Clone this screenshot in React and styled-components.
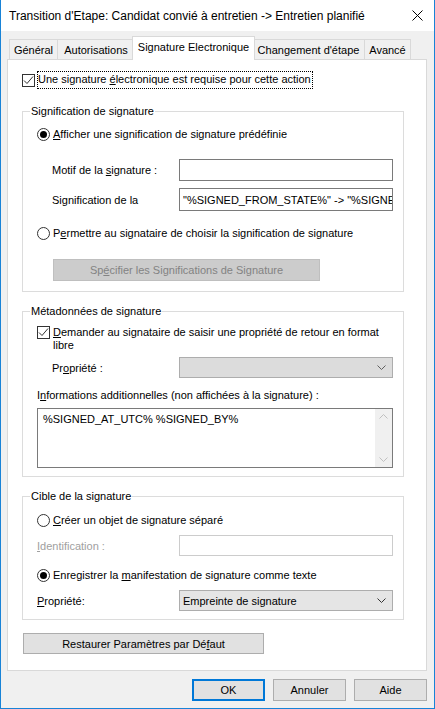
import React from "react";
import styled, { createGlobalStyle } from "styled-components";

const FONT = `"Liberation Sans", Arial, sans-serif`;

const GlobalStyle = createGlobalStyle`
  html, body { margin: 0; padding: 0; background: #fff; }
  body { font-family: ${FONT}; font-size: 11px; color: #000; }
  * { box-sizing: border-box; }
`;

const Window = styled.div`
  width: 435px;
  height: 709px;
  border: 1px solid #1883d7;
  border-top: none;
  background: #f0f0f0;
  display: flex;
  flex-direction: column;
`;

const TitleBar = styled.div`
  height: 31px;
  background: #fff;
  display: flex;
  align-items: center;
  justify-content: space-between;
  padding: 0 11px 0 8px;
  font-size: 12px;
`;

const Body = styled.div`
  flex: 1;
  padding: 5px 7px 0 6px;
  display: flex;
  flex-direction: column;
`;

const TabStrip = styled.div`
  display: flex;
  align-items: flex-end;
  height: 23px;
  padding-left: 2px;
`;

const Tab = styled.div`
  position: relative;
  width: ${(p) => p.w}px;
  height: ${(p) => (p.active ? 24 : 20)}px;
  margin-left: ${(p) => (p.active ? -3 : p.first ? 0 : -1)}px;
  margin-right: ${(p) => (p.active ? -2 : 0)}px;
  margin-bottom: ${(p) => (p.active ? -1 : 0)}px;
  z-index: ${(p) => (p.active ? 2 : 1)};
  border: 1px solid #d9d9d9;
  border-bottom: none;
  background: ${(p) => (p.active ? "#fff" : "#f0f0f0")};
  display: flex;
  justify-content: center;
  align-items: ${(p) => (p.active ? "flex-start" : "center")};
  padding-top: ${(p) => (p.active ? 4 : 1)}px;
  white-space: nowrap;
`;

const Panel = styled.div`
  height: 612px;
  border: 1px solid #d9d9d9;
  background: #fff;
  padding: 11px 22px 0 14px;
  display: flex;
  flex-direction: column;
`;

const TopCheckRow = styled.div`
  display: flex;
  align-items: center;
  height: 18px;
`;

const FocusLabel = styled.span`
  margin-left: 2px;
  border: 1px dotted #000;
  padding: 1px 1px 2px 0;
  line-height: 13px;
`;

const Group = styled.fieldset`
  margin: ${(p) => p.mt}px 0 0 0;
  padding: 0 10px ${(p) => p.pb}px 14px;
  border: 1px solid #dcdcdc;
  min-width: 0;
  display: flex;
  flex-direction: column;
`;

const Legend = styled.legend`
  margin-left: -7px;
  padding: 0 1px;
  line-height: 15px;
`;

const OptionRow = styled.label`
  display: flex;
  align-items: ${(p) => (p.multi ? "flex-start" : "center")};
  min-height: 16px;
  margin-top: ${(p) => p.mt}px;
  gap: 3px;
  line-height: 13px;
`;

const RadioDot = styled.span`
  flex: none;
  width: 13px;
  height: 13px;
  border-radius: 50%;
  border: 1px solid #333;
  background: #fff;
  display: flex;
  align-items: center;
  justify-content: center;
  &::after {
    content: "";
    width: 7px;
    height: 7px;
    border-radius: 50%;
    background: ${(p) => (p.checked ? "#000" : "transparent")};
  }
`;

const CheckBox = styled.span`
  flex: none;
  width: 13px;
  height: 13px;
  border: 1px solid #333;
  background: #fff;
  display: flex;
`;

const FieldRow = styled.div`
  display: flex;
  align-items: center;
  margin-top: ${(p) => p.mt}px;
  padding-left: ${(p) => p.indent || 0}px;
`;

const FieldLabel = styled.span`
  flex: 1;
  color: ${(p) => (p.disabled ? "#a0a0a0" : "#000")};
`;

const TextBox = styled.div`
  width: 214px;
  height: ${(p) => p.h}px;
  border: 1px solid ${(p) => (p.disabled ? "#cccccc" : "#7a7a7a")};
  background: #fff;
  padding: 0 3px;
  display: flex;
  align-items: center;
  white-space: nowrap;
  overflow: hidden;
`;

const Combo = styled.div`
  width: 214px;
  height: 21px;
  border: 1px solid #adadad;
  background: ${(p) => (p.disabled ? "#dcdcdc" : "#e5e5e5")};
  display: flex;
  align-items: center;
  justify-content: space-between;
  padding: 0 6px 0 3px;
  color: #000;
`;

const PlainLabel = styled.div`
  margin-top: ${(p) => p.mt}px;
  line-height: 15px;
`;

const TextArea = styled.div`
  margin-top: 5px;
  height: 60px;
  border: 1px solid #7a7a7a;
  display: flex;
`;

const AreaText = styled.div`
  flex: 1;
  padding: 4px 5px;
`;

const ScrollBar = styled.div`
  width: 17px;
  background: #f0f0f0;
  display: flex;
  flex-direction: column;
  justify-content: space-between;
  align-items: center;
  padding: 5px 0;
`;

const Button = styled.div`
  width: ${(p) => p.w}px;
  height: ${(p) => p.h || 22}px;
  margin-top: ${(p) => p.mt || 0}px;
  margin-left: ${(p) => p.ml || 0}px;
  border: ${(p) => (p.primary ? "2px solid #0078d7" : p.disabled ? "1px solid #bfbfbf" : "1px solid #adadad")};
  background: ${(p) => (p.disabled ? "#cccccc" : "#e1e1e1")};
  color: ${(p) => (p.disabled ? "#838383" : "#000")};
  display: flex;
  align-items: center;
  justify-content: center;
  white-space: nowrap;
`;

const Footer = styled.div`
  display: flex;
  justify-content: flex-end;
  gap: 8px;
  margin-top: 8px;
`;

const Chevron = ({ up, color = "#333" }) => (
  <svg width="9" height="5" viewBox="0 0 9 5">
    <polyline
      points={up ? "0.5,4.5 4.5,0.5 8.5,4.5" : "0.5,0.5 4.5,4.5 8.5,0.5"}
      fill="none"
      stroke={color}
      strokeWidth="1"
    />
  </svg>
);

const CloseIcon = () => (
  <svg width="11" height="11" viewBox="0 0 11 11">
    <path d="M0.5 0.5 L10.5 10.5 M10.5 0.5 L0.5 10.5" stroke="#000" strokeWidth="1" />
  </svg>
);

const Check = ({ checked }) => (
  <CheckBox>
    {checked && (
      <svg width="11" height="11" viewBox="0 0 11 11">
        <polyline points="1,5.5 4,8.5 10,1.5" fill="none" stroke="#333" strokeWidth="1" />
      </svg>
    )}
  </CheckBox>
);

const App = () => {
  return (
    <>
      <GlobalStyle />
      <Window>
        <TitleBar>
          <span>Transition d'Etape: Candidat convié à entretien -&gt; Entretien planifié</span>
          <CloseIcon />
        </TitleBar>
        <Body>
          <TabStrip>
            <Tab first w={49}>Général</Tab>
            <Tab w={78}>Autorisations</Tab>
            <Tab active w={123}>Signature Electronique</Tab>
            <Tab w={113}>Changement d'étape</Tab>
            <Tab w={47}>Avancé</Tab>
          </TabStrip>
          <Panel>
            <TopCheckRow>
              <Check checked />
              <FocusLabel>
                Une signature <u>é</u>lectronique est requise pour cette action
              </FocusLabel>
            </TopCheckRow>

            <Group mt={15} pb={10}>
              <Legend>Signification de signature</Legend>
              <OptionRow mt={7}>
                <RadioDot checked />
                <span><u>A</u>fficher une signification de signature prédéfinie</span>
              </OptionRow>
              <FieldRow mt={17} indent={15}>
                <FieldLabel>Motif de la <u>s</u>ignature :</FieldLabel>
                <TextBox h={22} />
              </FieldRow>
              <FieldRow mt={7} indent={15}>
                <FieldLabel>Signification de la</FieldLabel>
                <TextBox h={23}>"%SIGNED_FROM_STATE%" -&gt; "%SIGNED_TO_STATE%"</TextBox>
              </FieldRow>
              <OptionRow mt={14}>
                <RadioDot />
                <span>P<u>e</u>rmettre au signataire de choisir la signification de signature</span>
              </OptionRow>
              <Button disabled w={267} h={22} mt={18} ml={16}>
                Sp<u>é</u>cifier les Significations de Signature
              </Button>
            </Group>

            <Group mt={12} pb={8}>
              <Legend>Métadonnées de signature</Legend>
              <OptionRow mt={7} multi>
                <Check checked />
                <span>
                  <u>D</u>emander au signataire de saisir une propriété de retour en format libre
                </span>
              </OptionRow>
              <FieldRow mt={5} indent={15}>
                <FieldLabel>Pr<u>o</u>priété :</FieldLabel>
                <Combo disabled>
                  <span />
                  <Chevron color="#606060" />
                </Combo>
              </FieldRow>
              <PlainLabel mt={10}>
                I<u>n</u>formations additionnelles (non affichées à la signature) :
              </PlainLabel>
              <TextArea>
                <AreaText>%SIGNED_AT_UTC% %SIGNED_BY%</AreaText>
                <ScrollBar>
                  <Chevron up color="#c0c0c0" />
                  <Chevron color="#c0c0c0" />
                </ScrollBar>
              </TextArea>
            </Group>

            <Group mt={12} pb={8}>
              <Legend>Cible de la signature</Legend>
              <OptionRow mt={8}>
                <RadioDot />
                <span><u>C</u>réer un objet de signature séparé</span>
              </OptionRow>
              <FieldRow mt={7}>
                <FieldLabel disabled><u>I</u>dentification :</FieldLabel>
                <TextBox disabled h={21} />
              </FieldRow>
              <OptionRow mt={11}>
                <RadioDot checked />
                <span>Enregistrer la <u>m</u>anifestation de signature comme texte</span>
              </OptionRow>
              <FieldRow mt={7}>
                <FieldLabel><u>P</u>ropriété:</FieldLabel>
                <Combo>
                  <span>Empreinte de signature</span>
                  <Chevron />
                </Combo>
              </FieldRow>
            </Group>

            <Button w={241} h={21} mt={13} ml={1}>
              Restaurer Paramètres par Dé<u>f</u>aut
            </Button>
          </Panel>
          <Footer>
            <Button primary w={73}>OK</Button>
            <Button w={73}>Annuler</Button>
            <Button w={73}>Aide</Button>
          </Footer>
        </Body>
      </Window>
    </>
  );
};

export default App;
